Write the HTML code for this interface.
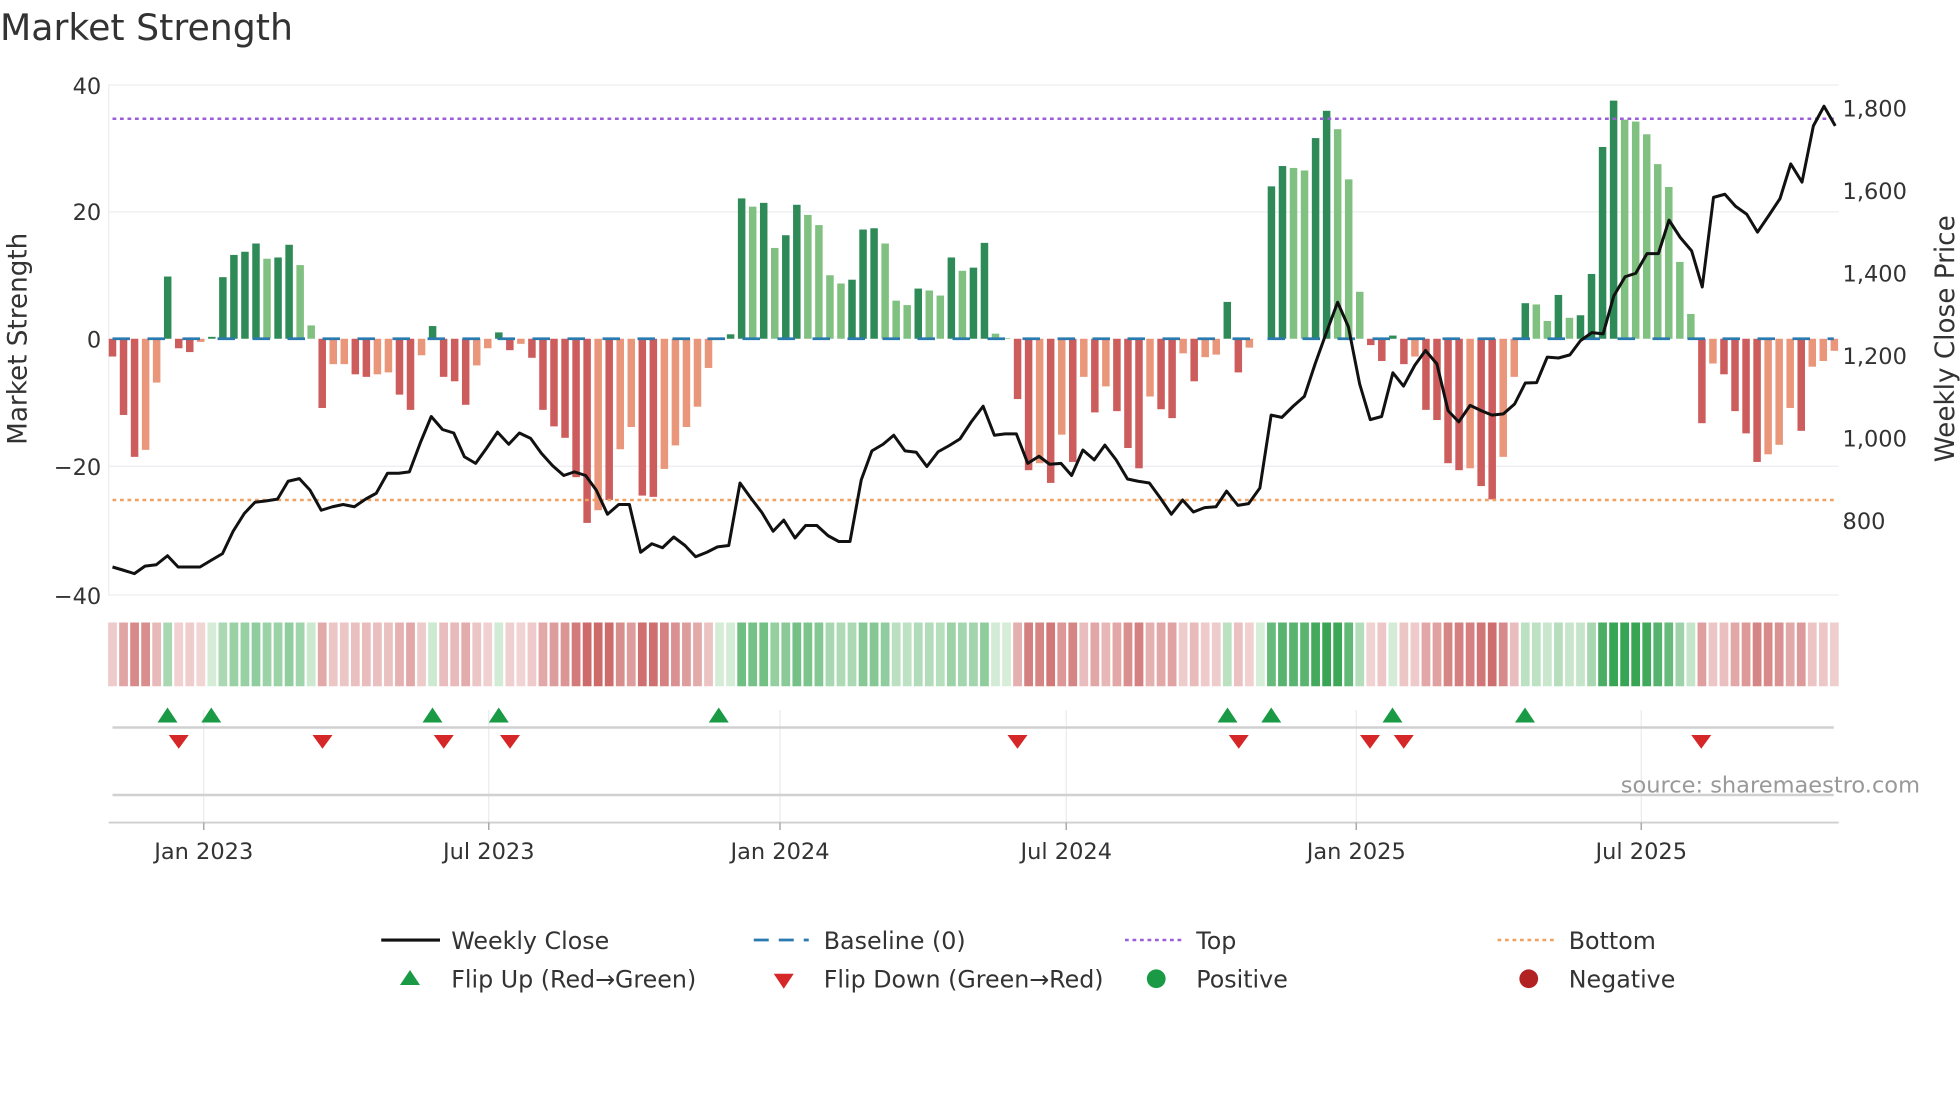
<!DOCTYPE html>
<html><head><meta charset="utf-8"><style>
html,body{margin:0;padding:0;background:#fff;}
svg{display:block;font-family:"DejaVu Sans","Liberation Sans",sans-serif;}
</style></head><body>
<svg id="s" width="1960" height="1102" viewBox="0 0 1568 881.6" xmlns="http://www.w3.org/2000/svg">
<rect width="1568" height="882" fill="#fff"/>
<text x="0" y="32" font-size="29" fill="#333">Market Strength</text>
<g stroke="#ebedf0" stroke-width="1">
<line x1="87" x2="1471" y1="68" y2="68"/><line x1="87" x2="1471" y1="169.5" y2="169.5"/>
<line x1="87" x2="1471" y1="373" y2="373"/><line x1="87" x2="1471" y1="476" y2="476"/>
<line x1="87" x2="87" y1="68" y2="476"/>
</g>
<g font-size="18" fill="#333" text-anchor="end">
<text x="81" y="75">40</text><text x="81" y="176">20</text><text x="81" y="278">0</text>
<text x="81" y="380">−20</text><text x="81" y="483">−40</text>
</g>
<g font-size="18" fill="#333">
<text x="1474" y="93">1,800</text><text x="1474" y="159">1,600</text><text x="1474" y="225">1,400</text>
<text x="1474" y="291">1,200</text><text x="1474" y="357">1,000</text><text x="1474" y="423">800</text>
</g>
<text transform="translate(21,271) rotate(-90)" font-size="21" fill="#333" text-anchor="middle">Market Strength</text>
<text transform="translate(1563,271) rotate(-90)" font-size="21" fill="#333" text-anchor="middle">Weekly Close Price</text>
<g id="bars"></g>
<line x1="90" x2="1467" y1="271" y2="271" stroke="#2a7ab0" stroke-width="2.2" stroke-dasharray="14,14"/>
<line x1="90" x2="1467" y1="95" y2="95" stroke="#9a5fd8" stroke-width="2" stroke-dasharray="3,3"/>
<line x1="90" x2="1467" y1="400" y2="400" stroke="#f0a060" stroke-width="2" stroke-dasharray="3,3"/>
<polyline id="price" fill="none" stroke="#111" stroke-width="2.4" stroke-linejoin="round"/>
<g id="heat"></g>
<g stroke="#e8ebef" stroke-width="1">
<line x1="163" x2="163" y1="568" y2="658"/><line x1="391" x2="391" y1="568" y2="658"/><line x1="624" x2="624" y1="568" y2="658"/>
<line x1="853" x2="853" y1="568" y2="658"/><line x1="1085" x2="1085" y1="568" y2="658"/><line x1="1313" x2="1313" y1="568" y2="658"/>
</g>
<line x1="90" x2="1467" y1="582" y2="582" stroke="#d0d0d0" stroke-width="2"/>
<line x1="90" x2="1467" y1="636" y2="636" stroke="#d0d0d0" stroke-width="2"/>
<line x1="87" x2="1471" y1="658" y2="658" stroke="#cfcfcf" stroke-width="1.5"/>
<g stroke="#aaa" stroke-width="1.2">
<line x1="163" x2="163" y1="658" y2="664"/><line x1="391" x2="391" y1="658" y2="664"/><line x1="624" x2="624" y1="658" y2="664"/>
<line x1="853" x2="853" y1="658" y2="664"/><line x1="1085" x2="1085" y1="658" y2="664"/><line x1="1313" x2="1313" y1="658" y2="664"/>
</g>
<g id="marks"></g>
<text x="1536" y="634" font-size="18" fill="#999" text-anchor="end">source: sharemaestro.com</text>
<g font-size="18" fill="#333" text-anchor="middle">
<text x="163" y="687">Jan 2023</text><text x="391" y="687">Jul 2023</text><text x="624" y="687">Jan 2024</text>
<text x="853" y="687">Jul 2024</text><text x="1085" y="687">Jan 2025</text><text x="1313" y="687">Jul 2025</text>
</g>
<g font-size="19" fill="#333">
<line x1="305" x2="352" y1="752" y2="752" stroke="#111" stroke-width="2.5"/>
<text x="361" y="759">Weekly Close</text>
<line x1="603" x2="647" y1="752" y2="752" stroke="#2a7ab0" stroke-width="2.2" stroke-dasharray="12,8"/>
<text x="659" y="759">Baseline (0)</text>
<line x1="900" x2="945" y1="752" y2="752" stroke="#9a5fd8" stroke-width="2" stroke-dasharray="3,3"/>
<text x="957" y="759">Top</text>
<line x1="1198" x2="1243" y1="752" y2="752" stroke="#f0a060" stroke-width="2" stroke-dasharray="3,3"/>
<text x="1255" y="759">Bottom</text>
<polygon points="320,788 336,788 328,776" fill="#1a9a45"/>
<text x="361" y="790">Flip Up (Red→Green)</text>
<polygon points="619,779 635,779 627,791" fill="#d62728"/>
<text x="659" y="790">Flip Down (Green→Red)</text>
<circle cx="925" cy="783" r="7.5" fill="#1a9a45"/>
<text x="957" y="790">Positive</text>
<circle cx="1223" cy="783" r="7.5" fill="#b22222"/>
<text x="1255" y="790">Negative</text>
</g>
</svg>
<script>
var V=[[-2.8,'r'],[-12,'r'],[-18.6,'r'],[-17.5,'o'],[-6.9,'o'],[9.8,'d'],[-1.5,'r'],[-2.1,'r'],[-0.5,'o'],[0.3,'d'],[9.7,'d'],[13.2,'d'],[13.7,'d'],[15,'d'],[12.6,'l'],[12.8,'d'],[14.8,'d'],[11.6,'l'],[2.1,'l'],[-10.9,'r'],[-4,'o'],[-4,'o'],[-5.6,'r'],[-6,'r'],[-5.6,'o'],[-5.3,'o'],[-8.8,'r'],[-11.2,'r'],[-2.6,'o'],[2,'d'],[-6,'r'],[-6.7,'r'],[-10.4,'r'],[-4.2,'o'],[-1.5,'o'],[1,'d'],[-1.8,'r'],[-0.8,'o'],[-3,'r'],[-11.2,'r'],[-13.8,'r'],[-15.6,'r'],[-21.8,'r'],[-29,'r'],[-27,'o'],[-25.4,'r'],[-17.4,'o'],[-13.9,'o'],[-24.7,'r'],[-24.9,'r'],[-20.5,'o'],[-16.8,'o'],[-13.9,'o'],[-10.7,'o'],[-4.6,'o'],[0.2,'d'],[0.7,'d'],[22.1,'d'],[20.8,'l'],[21.4,'d'],[14.3,'l'],[16.3,'d'],[21.1,'d'],[19.5,'l'],[17.9,'l'],[10,'l'],[8.7,'l'],[9.3,'d'],[17.2,'d'],[17.4,'d'],[15,'l'],[6,'l'],[5.3,'l'],[7.9,'d'],[7.6,'l'],[6.8,'l'],[12.8,'d'],[10.7,'l'],[11.2,'d'],[15.1,'d'],[0.8,'l'],[0.1,'l'],[-9.5,'r'],[-20.7,'r'],[-19.6,'o'],[-22.7,'r'],[-15.1,'o'],[-19.4,'r'],[-6,'o'],[-11.6,'r'],[-7.5,'o'],[-11.4,'r'],[-17.2,'r'],[-20.4,'r'],[-9.1,'o'],[-11.1,'r'],[-12.5,'r'],[-2.3,'o'],[-6.7,'r'],[-2.9,'o'],[-2.5,'o'],[5.8,'d'],[-5.3,'r'],[-1.4,'o'],[0,'d'],[24,'d'],[27.2,'d'],[26.9,'l'],[26.5,'l'],[31.6,'d'],[35.9,'d'],[33,'l'],[25.1,'l'],[7.4,'l'],[-1,'r'],[-3.5,'r'],[0.5,'d'],[-4,'r'],[-2.8,'o'],[-11.2,'r'],[-12.8,'r'],[-19.6,'r'],[-20.7,'r'],[-20.4,'o'],[-23.2,'r'],[-25.3,'r'],[-18.6,'o'],[-6,'o'],[5.6,'d'],[5.4,'l'],[2.8,'l'],[6.9,'d'],[3.3,'l'],[3.7,'d'],[10.2,'d'],[30.2,'d'],[37.5,'d'],[34.5,'l'],[34.2,'l'],[32.2,'l'],[27.5,'l'],[23.9,'l'],[12.1,'l'],[3.9,'l'],[-13.3,'r'],[-3.9,'o'],[-5.6,'r'],[-11.4,'r'],[-14.9,'r'],[-19.4,'r'],[-18.2,'o'],[-16.7,'o'],[-10.9,'o'],[-14.5,'r'],[-4.4,'o'],[-3.5,'o'],[-1.9,'o']];
var C={r:'#cd5c5c',o:'#e9967a',d:'#2e8b57',l:'#80c080'};
var ns='http://www.w3.org/2000/svg';
function el(p,t,a){var e=document.createElementNS(ns,t);for(var k in a)e.setAttribute(k,a[k]);p.appendChild(e);return e;}
var bars=document.getElementById('bars'),heat=document.getElementById('heat');
function mix(a,b,t){var r=[];for(var i=0;i<3;i++)r.push(Math.round(a[i]+(b[i]-a[i])*t));return 'rgb('+r.join(',')+')';}
for(var i=0;i<V.length;i++){
 var x=90+8.83*i,v=V[i][0],h=Math.abs(v)*5.08,y=v>=0?271-h:271;
 if(h>0.3)el(bars,'rect',{x:x-3,y:y,width:6,height:h,fill:C[V[i][1]]});
 var f;
 if(v>=0){f=mix([214,237,216],[56,165,84],Math.min(1,v/34));}
 else{f=mix([242,214,214],[205,106,106],Math.min(1,-v/26));}
 el(heat,'rect',{x:x-3.5,y:498,width:7,height:51,fill:f});
}
var P1=[[180,1270],[197,1277],[215,1285],[232,1268],[250,1265],[268,1245],[285,1270],[320,1270],[338,1255],[356,1240],[373,1190],[391,1150],[408,1125],[426,1122],[444,1118],[461,1078],[479,1072],[496,1098],[514,1143],[532,1135],[549,1130],[567,1135],[585,1118],[602,1105],[620,1060],[638,1060],[655,1057],[673,990],[690,933],[708,962],[726,970],[743,1023],[761,1038],[778,1005],[796,968],[814,995],[831,970],[849,982],[866,1015],[884,1043],[902,1065],[919,1057],[937,1065],[954,1098],[972,1152],[990,1130],[1007,1130],[1025,1237],[1043,1218],[1060,1227],[1078,1203],[1096,1222],[1113,1247],[1131,1237],[1148,1225],[1166,1222],[1184,1082],[1201,1115],[1219,1148],[1237,1190],[1254,1165],[1272,1205],[1289,1177],[1307,1177],[1325,1200],[1342,1213],[1360,1213],[1378,1075],[1395,1010],[1413,995],[1430,975],[1448,1010],[1466,1013],[1483,1045],[1501,1012],[1519,998],[1536,983],[1554,945]];
var P2=[[5,910],[23,975],[40,972],[58,972],[76,1038],[94,1022],[111,1040],[129,1038],[146,1065],[164,1008],[182,1030],[199,997],[217,1030],[235,1073],[252,1078],[270,1082],[287,1115],[305,1152],[323,1120],[340,1147],[358,1137],[376,1135],[393,1100],[411,1132],[428,1128],[446,1093],[464,930],[481,935],[499,910],[517,888],[534,815],[552,745],[570,677],[587,732],[605,860],[622,940],[640,933],[658,835],[675,865],[693,818],[710,785],[728,815],[746,920],[763,945],[781,908],[799,920],[816,930],[834,927],[852,905],[869,858],[887,857],[904,800],[922,802],[940,795],[957,763],[975,745],[993,748],[1010,663],[1028,620],[1045,612],[1063,568],[1081,568],[1098,493],[1116,532],[1134,562],[1151,643],[1169,442],[1187,435],[1204,462],[1222,480],[1239,520],[1257,483],[1275,445],[1292,367],[1310,408],[1328,282],[1345,238],[1363,282]];
var pts=[];
P1.forEach(function(p){pts.push((p[0]/2).toFixed(1)+','+(p[1]/2.8).toFixed(1));});
P2.forEach(function(p){pts.push((784+p[0]/2*1.004).toFixed(1)+','+(p[1]/2.8).toFixed(1));});
document.getElementById('price').setAttribute('points',pts.join(' '));
var marks=document.getElementById('marks');
[134,169,346,399,575,982,1017,1114,1220].forEach(function(x){el(marks,'polygon',{points:(x-8)+',578 '+(x+8)+',578 '+x+',566',fill:'#1a9a45'});});
[143,258,355,408,814,991,1096,1123,1361].forEach(function(x){el(marks,'polygon',{points:(x-8)+',588 '+(x+8)+',588 '+x+',599',fill:'#d62728'});});
</script>
</body></html>
